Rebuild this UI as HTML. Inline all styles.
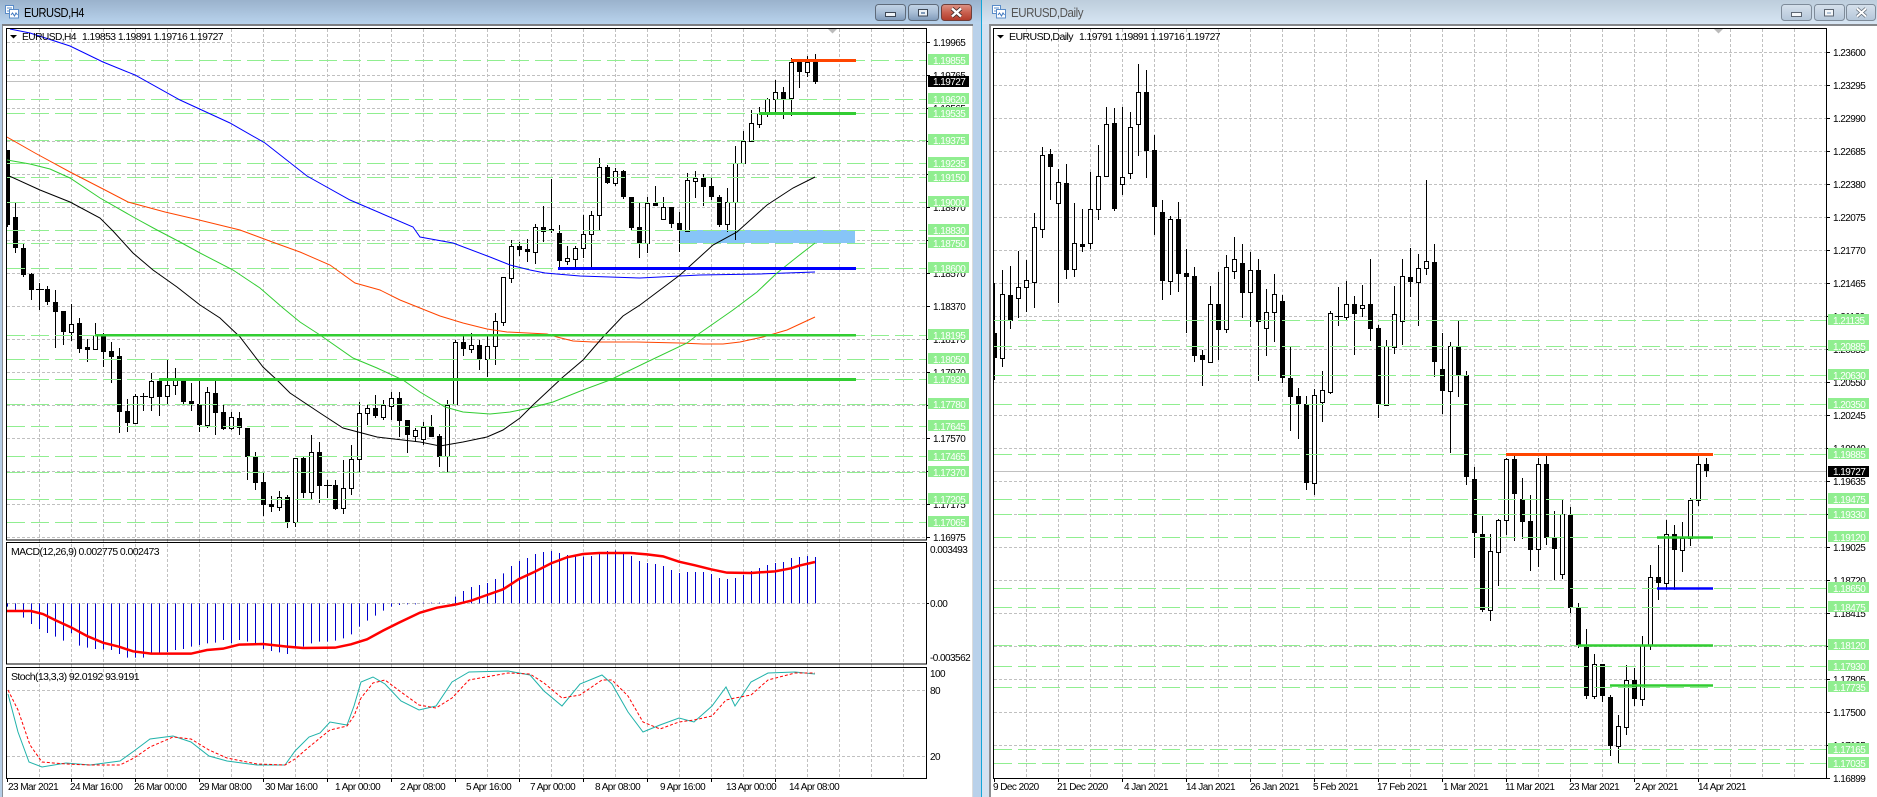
<!DOCTYPE html>
<html><head><meta charset="utf-8"><title>EURUSD charts</title>
<style>
html,body{margin:0;padding:0;background:#fff;width:1877px;height:797px;overflow:hidden}
svg{position:absolute;left:0;top:0;display:block}
text{font-family:"Liberation Sans",sans-serif;font-size:10px;letter-spacing:-.55px;fill:#000}
.w{fill:#fff}
.tt{font-size:12.5px;letter-spacing:-.5px}
</style></head><body>
<svg width="1877" height="797" viewBox="0 0 1877 797" xmlns="http://www.w3.org/2000/svg">
<defs>
<linearGradient id="t1" x1="0" y1="0" x2="0" y2="1"><stop offset="0" stop-color="#9ab2cc"/><stop offset="1" stop-color="#b9d3ed"/></linearGradient>
<linearGradient id="t2" x1="0" y1="0" x2="0" y2="1"><stop offset="0" stop-color="#bdcddc"/><stop offset="1" stop-color="#d7e5f3"/></linearGradient>
<linearGradient id="b1" x1="0" y1="0" x2="0" y2="1"><stop offset="0" stop-color="#c3d4e6"/><stop offset=".5" stop-color="#a9bed6"/><stop offset="1" stop-color="#7f9ab9"/></linearGradient>
<linearGradient id="b2" x1="0" y1="0" x2="0" y2="1"><stop offset="0" stop-color="#dc9385"/><stop offset=".5" stop-color="#c9604f"/><stop offset="1" stop-color="#b13a2a"/></linearGradient>
<linearGradient id="b3" x1="0" y1="0" x2="0" y2="1"><stop offset="0" stop-color="#d6e1ec"/><stop offset="1" stop-color="#b4c6d9"/></linearGradient>
<clipPath id="cl"><rect x="7" y="29" width="919" height="511"/></clipPath>
<clipPath id="cr"><rect x="994" y="29" width="832" height="750"/></clipPath>
</defs>

<!-- window chrome -->
<rect x="0" y="0" width="982" height="24" fill="url(#t1)"/>
<rect x="982" y="0" width="895" height="24" fill="url(#t2)"/>
<rect x="0" y="24" width="3" height="773" fill="#b5cde6"/>
<rect x="2" y="24" width="1" height="773" fill="#8a8f96"/>
<rect x="2" y="24" width="971" height="2" fill="#7d7f84"/>
<rect x="973" y="24" width="8" height="773" fill="#b9d1ea"/>
<rect x="981" y="0" width="1" height="797" fill="#12a6d8"/>
<rect x="982" y="24" width="7" height="773" fill="#d4e2f0"/>
<rect x="989" y="24" width="2" height="773" fill="#8b8d90"/>
<rect x="989" y="24" width="888" height="2" fill="#85888c"/>
<rect x="972" y="26" width="1" height="771" fill="#dcdcdc"/>

<!-- title icons -->
<g fill="#fff" stroke="#5a8cc8" stroke-width="1">
<rect x="5.500" y="5.500" width="8" height="8"/><rect x="9.500" y="9.500" width="9" height="8.500"/>
<rect x="992.500" y="5.500" width="8" height="8"/><rect x="996.500" y="9.500" width="9" height="8.500"/>
</g>
<path d="M11 15l1.500-2 2 3 1.500-3 1.500 2M998 15l1.500-2 2 3 1.500-3 1.500 2" fill="none" stroke="#3f78c0" stroke-width="1"/>
<path d="M7 8h5M7 11h2M994 8h5M994 11h2" stroke="#5a8cc8" stroke-width="1"/>
<text x="24" y="17" class="tt" fill="#111" textLength="60" lengthAdjust="spacingAndGlyphs">EURUSD,H4</text>
<text x="1011" y="17" class="tt" style="fill:#555" textLength="72" lengthAdjust="spacingAndGlyphs">EURUSD,Daily</text>

<!-- left buttons -->
<rect x="875.500" y="4.500" width="30" height="16" rx="3" fill="url(#b1)" stroke="#5f6b7a"/>
<rect x="908.500" y="4.500" width="30" height="16" rx="3" fill="url(#b1)" stroke="#5f6b7a"/>
<rect x="941.500" y="4.500" width="30" height="16" rx="3" fill="url(#b2)" stroke="#6f3f3a"/>
<rect x="885.500" y="12.500" width="10" height="4" fill="#eef3f8" stroke="#3c4654"/>
<rect x="918.500" y="9.500" width="9" height="6.500" fill="#eef3f8" stroke="#3c4654"/>
<rect x="921" y="12" width="4" height="2" fill="#7f9ab9"/>
<path d="M952 8.500l9 8M961 8.500l-9 8" stroke="#3c2a28" stroke-width="4"/>
<path d="M952 8.500l9 8M961 8.500l-9 8" stroke="#fff" stroke-width="2.500"/>
<!-- right buttons -->
<rect x="1781.500" y="4.500" width="30" height="16" rx="3" fill="url(#b3)" stroke="#7e8b99"/>
<rect x="1814.500" y="4.500" width="30" height="16" rx="3" fill="url(#b3)" stroke="#7e8b99"/>
<rect x="1846.500" y="4.500" width="29" height="16" rx="3" fill="url(#b3)" stroke="#7e8b99"/>
<rect x="1791.500" y="12.500" width="10" height="4" fill="#f4f7fa" stroke="#5c6672"/>
<rect x="1824.500" y="9.500" width="9" height="6.500" fill="#f4f7fa" stroke="#5c6672"/>
<rect x="1827" y="12" width="4" height="2" fill="#b4c6d9"/>
<path d="M1857 8.500l9 8M1866 8.500l-9 8" stroke="#5c6672" stroke-width="3.500"/>
<path d="M1857 8.500l9 8M1866 8.500l-9 8" stroke="#fff" stroke-width="2"/>

<!-- ============ LEFT CHART ============ -->
<!-- grid -->
<path stroke="#c0c0c0" stroke-dasharray="3 2" fill="none" d="M39.500 29V778M71.500 29V778M103.500 29V778M135.500 29V778M167.500 29V778M199.500 29V778M231.500 29V778M263.500 29V778M295.500 29V778M327.500 29V778M359.500 29V778M391.500 29V778M423.500 29V778M455.500 29V778M487.500 29V778M519.500 29V778M551.500 29V778M583.500 29V778M615.500 29V778M647.500 29V778M679.500 29V778M711.500 29V778M743.500 29V778M775.500 29V778M807.500 29V778M839.500 29V778M871.500 29V778M903.500 29V778"/>
<path stroke="#c0c0c0" stroke-dasharray="3 2" fill="none" d="M7 42.500H926M7 75.500H926M7 108.500H926M7 141.500H926M7 174.500H926M7 207.500H926M7 240.500H926M7 273.500H926M7 306.500H926M7 339.500H926M7 372.500H926M7 405.500H926M7 438.500H926M7 471.500H926M7 504.500H926M7 537.500H926M7 603.500H926M7 690.500H926M7 756.500H926"/>

<g clip-path="url(#cl)">
<rect x="679" y="230" width="176" height="13" fill="#87c5f7"/>
<path stroke="#c0c0c0" d="M7 81.500H926"/>
<!-- wicks -->
<path stroke="#000" fill="none" d="M7.500 150V227M15.500 203V253M23.500 243V277M31.500 273V300M39.500 283V310M36 289.500h8M47.500 286V305M55.500 290V348M63.500 311V345M71.500 304V341M79.500 318V353M87.500 339V362M95.500 323V349M103.500 333V367M111.500 342V383M119.500 348V433M127.500 399V432M135.500 394V423M143.500 393V411M140 396.500h8M151.500 373V411M159.500 380V416M167.500 360V405M175.500 368V395M183.500 381V405M191.500 383V411M199.500 380V432M207.500 387V428M215.500 381V435M223.500 405V430M231.500 412V430M239.500 412V435M247.500 428V480M255.500 452V490M263.500 473V516M271.500 496V512M279.500 491V511M287.500 495V528M295.500 458V527M303.500 457V498M311.500 435V499M319.500 442V503M327.500 480V498M324 485.500h8M335.500 480V510M343.500 460V514M351.500 445V495M359.500 402V472M367.500 405V425M375.500 395V418M383.500 400V420M391.500 392V420M399.500 392V437M407.500 420V453M415.500 428V442M423.500 422V445M431.500 415V437M439.500 434V467M447.500 400V472M455.500 340V405M463.500 336V356M471.500 333V353M479.500 340V370M487.500 336V377M495.500 313V365M503.500 277V326M511.500 240V283M519.500 242V256M527.500 239V262M535.500 224V264M543.500 206V242M551.500 179V233M559.500 225V269M567.500 246V265M575.500 246V267M583.500 215V258M591.500 211V267M599.500 158V230M607.500 165V184M615.500 168V186M623.500 170V199M631.500 197V230M639.500 203V258M647.500 197V253M655.500 186V206M663.500 197V220M671.500 207V228M679.500 212V252M687.500 173V231M695.500 171V198M703.500 174V206M711.500 177V200M719.500 195V227M727.500 188V232M735.500 146V240M743.500 131V164M751.500 110V141M759.500 107V128M767.500 98V117M775.500 80V112M783.500 87V119M791.500 58V116M799.500 60V88M807.500 56V77M815.500 54V84"/>
<!-- black bodies -->
<path stroke="#000" stroke-width="5" fill="none" d="M7.500 150V225M15.500 217V248M23.500 248V275M31.500 274V290M47.500 289V302M55.500 302V312M63.500 311V332M79.500 323V349M87.500 347V350M103.500 335V352M111.500 351V357M119.500 356V412M127.500 411V423M159.500 381V397M183.500 381V402M191.500 401V404M199.500 404V425M215.500 393V413M223.500 412V429M239.500 418V428M247.500 428V457M255.500 457V483M263.500 482V505M271.500 504V507M287.500 497V522M303.500 458V493M319.500 452V486M335.500 485V509M375.500 408V416M399.500 398V421M407.500 420V435M431.500 427V437M439.500 436V457M463.500 342V349M479.500 345V359M519.500 246V250M527.500 249V252M543.500 227V232M551.500 229V231M559.500 233V261M607.500 167V183M623.500 171V197M631.500 197V228M639.500 227V243M655.500 203V206M671.500 207V224M679.500 223V230M703.500 178V187M711.500 186V197M719.500 197V225M783.500 92V99M799.500 62V72M815.500 62V82"/>
<!-- hollow bodies -->
<path stroke="#000" fill="#fff" d="M69.500 324.500h4V332.500h-4zM93.500 335.500h4V349.500h-4zM133.500 396.500h4V423.500h-4zM149.500 381.500h4V397.500h-4zM165.500 385.500h4V396.500h-4zM173.500 380.500h4V385.500h-4zM205.500 392.500h4V425.500h-4zM229.500 417.500h4V428.500h-4zM277.500 497.500h4V507.500h-4zM293.500 458.500h4V522.500h-4zM309.500 452.500h4V492.500h-4zM341.500 488.500h4V508.500h-4zM349.500 459.500h4V488.500h-4zM357.500 413.500h4V459.500h-4zM365.500 408.500h4V413.500h-4zM381.500 405.500h4V417.500h-4zM389.500 398.500h4V406.500h-4zM413.500 430.500h4V436.500h-4zM421.500 427.500h4V439.500h-4zM445.500 405.500h4V456.500h-4zM453.500 342.500h4V404.500h-4zM469.500 345.500h4V349.500h-4zM485.500 346.500h4V359.500h-4zM493.500 321.500h4V346.500h-4zM501.500 277.500h4V322.500h-4zM509.500 246.500h4V278.500h-4zM533.500 227.500h4V252.500h-4zM565.500 258.500h4V261.500h-4zM573.500 248.500h4V259.500h-4zM581.500 234.500h4V248.500h-4zM589.500 215.500h4V234.500h-4zM597.500 167.500h4V215.500h-4zM613.500 171.500h4V183.500h-4zM645.500 203.500h4V243.500h-4zM661.500 207.500h4V219.500h-4zM685.500 180.500h4V231.500h-4zM693.500 178.500h4V181.500h-4zM725.500 202.500h4V224.500h-4zM733.500 163.500h4V202.500h-4zM741.500 141.500h4V163.500h-4zM749.500 123.500h4V141.500h-4zM757.500 113.500h4V124.500h-4zM765.500 99.500h4V113.500h-4zM773.500 92.500h4V99.500h-4zM789.500 62.500h4V98.500h-4zM805.500 62.500h4V72.500h-4z"/>
<!-- green level dashes -->
<path stroke="#90ee90" stroke-dasharray="18 6" fill="none" d="M7 60.500H926M7 99.500H926M7 113.500H926M7 140.500H926M7 163.500H926M7 177.500H926M7 202.500H926M7 230.500H926M7 243.500H926M7 268.500H926M7 335.500H926M7 359.500H926M7 379.500H926M7 404.500H926M7 426.500H926M7 456.500H926M7 472.500H926M7 499.500H926M7 522.500H926"/>
<!-- MAs -->
<g fill="none" stroke-width="1">
<polyline stroke="#0000ff" points="10,29 30,33 70,46 103,62 135,75 180,100 230,123 265,143 307,176 350,200 413,227 420,237 453,243 490,257 510,265 530,270 545,273 580,276 640,278 700,275 760,274 815,272"/>
<polyline stroke="#ff4500" points="7,137 35,153 70,172 105,190 128,202 165,212 195,219 240,230 275,243 300,252 330,265 355,283 380,290 400,300 420,308 440,316 463,323 487,329 507,332 547,334 557,337 573,341 593,342 637,342 680,343 703,344 723,344 740,342 763,337 787,330 815,317"/>
<polyline stroke="#32cd32" points="7,160 30,164 50,169 70,178 100,198 135,218 157,230 180,242 200,253 233,270 260,288 283,308 300,322 320,335 353,358 377,368 403,380 420,392 445,407 463,412 490,414 510,412 530,408 553,402 583,390 610,380 647,362 687,343 700,333 733,310 757,292 777,273 797,257 815,243"/>
<polyline stroke="#000" points="7,175 40,190 70,202 100,218 113,231 133,253 153,270 177,287 200,305 220,318 240,337 263,367 277,380 290,393 320,413 343,428 377,437 420,442 440,446 463,442 487,437 503,430 520,418 533,405 563,377 583,360 603,337 623,316 640,305 680,275 713,245 737,232 767,205 793,188 815,177"/>
</g>
<!-- thick levels -->
<path stroke="#ff4500" stroke-width="3" d="M791 60.500H856"/>
<path stroke="#32cd32" stroke-width="3" d="M759 113.500H856M159 379.500H856"/>
<path stroke="#32cd32" stroke-width="2.500" d="M95 335.200H856"/>
<path stroke="#0000ff" stroke-width="3" d="M558 268.500H856"/>
</g>

<!-- MACD -->
<g transform="translate(0,450) scale(1,.33333)">
<path vector-effect="non-scaling-stroke" stroke="#0000cd" stroke-width="1" fill="none" d="M7.500 460V470M15.500 460V480M23.500 460V503M31.500 460V522M39.500 460V537M47.500 460V549M55.500 460V560M63.500 460V572M71.500 460V550M79.500 460V587M87.500 460V593M95.500 460V597M103.500 460V598M111.500 460V600M119.500 460V612M127.500 460V623M135.500 460V623M143.500 460V623M151.500 460V612M159.500 460V612M167.500 460V606M175.500 460V600M183.500 460V597M191.500 460V590M199.500 460V585M207.500 460V580M215.500 460V578M223.500 460V570M231.500 460V580M239.500 460V570M247.500 460V575M255.500 460V580M263.500 460V597M271.500 460V603M279.500 460V607M287.500 460V612M295.500 460V595M303.500 460V590M311.500 460V580M319.500 460V575M327.500 460V575M335.500 460V572M343.500 460V565M351.500 460V553M359.500 460V530M367.500 460V512M375.500 460V497M383.500 460V482M391.500 460V470M399.500 460V465M407.500 460V463M415.500 460V463M423.500 460V458M431.500 460V458M439.500 460V458M455.500 460V440M463.500 460V423M471.500 460V411M479.500 460V405M487.500 460V399M495.500 460V387M503.500 460V370M511.500 460V348M519.500 460V333M527.500 460V324M535.500 460V312M543.500 460V306M551.500 460V303M559.500 460V309M567.500 460V315M575.500 460V318M583.500 460V320M591.500 460V318M599.500 460V307M607.500 460V303M615.500 460V301M623.500 460V310M631.500 460V318M639.500 460V333M647.500 460V339M655.500 460V342M663.500 460V348M671.500 460V360M679.500 460V369M687.500 460V366M695.500 460V366M703.500 460V366M711.500 460V372M719.500 460V384M727.500 460V387M735.500 460V384M743.500 460V375M751.500 460V363M759.500 460V354M767.500 460V345M775.500 460V339M783.500 460V336M791.500 460V324M799.500 460V321M807.500 460V318M815.500 460V321"/>
<polyline vector-effect="non-scaling-stroke" stroke="#ff0000" stroke-width="2.500" fill="none" points="7,483 31,483 43,492 55,510 71,532 87,558 103,578 119,590 133,604 151,611 191,611 207,600 223,596 239,584 263,582 287,590 303,594 335,593 351,583 367,568 383,542 399,518 420,488 437,473 455,464 471,452 487,435 503,418 519,387 535,365 551,340 567,322 583,312 599,309 631,309 647,313 663,319 679,335 695,346 711,358 727,368 751,369 775,364 791,355 799,347 815,336"/>
</g>

<!-- Stoch -->
<polyline fill="none" stroke="#20b2aa" points="8,694 18,732 29,762 42,767 66,763 90,765 120,761 134,751 150,739 173,736 191,742 209,756 227,761 257,765 285,765 295,751 309,737 320,733 330,722 347,725 354,706 361,682 373,677 385,684 401,701 419,710 436,706 452,682 469,672 508,671 530,675 544,691 562,706 580,684 602,675 612,684 628,712 643,732 660,725 679,718 694,722 712,706 726,687 735,706 751,682 768,673 795,672 815,674"/>
<polyline fill="none" stroke="#ff0000" stroke-dasharray="3 2" points="8,690 18,710 30,745 42,762 66,764 90,765 120,765 134,758 150,747 173,737 191,739 209,750 227,758 257,764 285,765 295,759 309,747 320,738 330,730 347,726 354,716 361,698 373,683 385,680 401,692 419,705 436,708 452,698 469,680 508,673 530,674 544,683 562,698 580,695 602,680 612,680 628,696 643,722 660,729 679,722 694,720 712,716 726,700 735,698 751,695 768,680 795,673 815,673"/>

<!-- left panels -->
<g fill="none" stroke="#000">
<rect x="6.500" y="28.500" width="920" height="511.500"/>
<rect x="6.500" y="542.500" width="920" height="121.500"/>
<rect x="6.500" y="667.500" width="920" height="111"/>
</g>
<path stroke="#000" d="M926 42.500h4M926 75.500h4M926 108.500h4M926 141.500h4M926 174.500h4M926 207.500h4M926 240.500h4M926 273.500h4M926 306.500h4M926 339.500h4M926 372.500h4M926 405.500h4M926 438.500h4M926 471.500h4M926 504.500h4M926 537.500h4M926 603.500h3M7.500 779v3M71.500 779v3M135.500 779v3M199.500 779v3M263.500 779v3M327.500 779v3M391.500 779v3M455.500 779v3M519.500 779v3M583.500 779v3M647.500 779v3M711.500 779v3M775.500 779v3"/>

<path d="M10 35h7l-3.500 3.500z" fill="#000"/>
<path d="M828 29h9l-4.500 4.500z" fill="#bbb"/>
<text x="22" y="40" textLength="54" lengthAdjust="spacingAndGlyphs">EURUSD,H4</text>
<text x="82" y="40" textLength="141" lengthAdjust="spacingAndGlyphs">1.19853 1.19891 1.19716 1.19727</text>
<text x="11" y="555" textLength="148" lengthAdjust="spacingAndGlyphs">MACD(12,26,9) 0.002775 0.002473</text>
<text x="11" y="680" textLength="128" lengthAdjust="spacingAndGlyphs">Stoch(13,3,3) 92.0192 93.9191</text>

<!-- left axis -->
<g>
<text x="933" y="46">1.19965</text><text x="933" y="79">1.19765</text><text x="933" y="112">1.19565</text><text x="933" y="145">1.19370</text><text x="933" y="178">1.19170</text><text x="933" y="211">1.18970</text><text x="933" y="244">1.18770</text><text x="933" y="277">1.18570</text><text x="933" y="310">1.18370</text><text x="933" y="343">1.18170</text><text x="933" y="376">1.17970</text><text x="933" y="409">1.17770</text><text x="933" y="442">1.17570</text><text x="933" y="475">1.17370</text><text x="933" y="508">1.17175</text><text x="933" y="541">1.16975</text>
<text x="930" y="553">0.003493</text><text x="930" y="607">0.00</text><text x="930" y="661">-0.003562</text>
<text x="930" y="677">100</text><text x="930" y="694">80</text><text x="930" y="760">20</text>
</g>
<g fill="#90ee90">
<rect x="928" y="54" width="41" height="11"/><rect x="928" y="93" width="41" height="11"/><rect x="928" y="107" width="41" height="11"/><rect x="928" y="134" width="41" height="11"/><rect x="928" y="157" width="41" height="11"/><rect x="928" y="171" width="41" height="11"/><rect x="928" y="196" width="41" height="11"/><rect x="928" y="224" width="41" height="11"/><rect x="928" y="237" width="41" height="11"/><rect x="928" y="262" width="41" height="11"/><rect x="928" y="329" width="41" height="11"/><rect x="928" y="353" width="41" height="11"/><rect x="928" y="373" width="41" height="11"/><rect x="928" y="398" width="41" height="11"/><rect x="928" y="420" width="41" height="11"/><rect x="928" y="450" width="41" height="11"/><rect x="928" y="466" width="41" height="11"/><rect x="928" y="493" width="41" height="11"/><rect x="928" y="516" width="41" height="11"/>
</g>
<rect x="928" y="76" width="41" height="11" fill="#000"/>
<g>
<text class="w" x="933" y="64">1.19855</text><text class="w" x="933" y="85">1.19727</text><text class="w" x="933" y="103">1.19620</text><text class="w" x="933" y="117">1.19535</text><text class="w" x="933" y="144">1.19375</text><text class="w" x="933" y="167">1.19235</text><text class="w" x="933" y="181">1.19150</text><text class="w" x="933" y="206">1.19000</text><text class="w" x="933" y="234">1.18830</text><text class="w" x="933" y="247">1.18750</text><text class="w" x="933" y="272">1.18600</text><text class="w" x="933" y="339">1.18195</text><text class="w" x="933" y="363">1.18050</text><text class="w" x="933" y="383">1.17930</text><text class="w" x="933" y="408">1.17780</text><text class="w" x="933" y="430">1.17645</text><text class="w" x="933" y="460">1.17465</text><text class="w" x="933" y="476">1.17370</text><text class="w" x="933" y="503">1.17205</text><text class="w" x="933" y="526">1.17065</text>
</g>
<!-- left time axis -->
<g>
<text x="8" y="790">23 Mar 2021</text><text x="70" y="790">24 Mar 16:00</text><text x="134" y="790">26 Mar 00:00</text><text x="199" y="790">29 Mar 08:00</text><text x="265" y="790">30 Mar 16:00</text><text x="335" y="790">1 Apr 00:00</text><text x="400" y="790">2 Apr 08:00</text><text x="466" y="790">5 Apr 16:00</text><text x="530" y="790">7 Apr 00:00</text><text x="595" y="790">8 Apr 08:00</text><text x="660" y="790">9 Apr 16:00</text><text x="726" y="790">13 Apr 00:00</text><text x="789" y="790">14 Apr 08:00</text>
</g>

<!-- ============ RIGHT CHART ============ -->
<path stroke="#c0c0c0" stroke-dasharray="3 2" fill="none" d="M1026.500 29V778M1058.500 29V778M1090.500 29V778M1122.500 29V778M1154.500 29V778M1186.500 29V778M1218.500 29V778M1250.500 29V778M1282.500 29V778M1314.500 29V778M1346.500 29V778M1378.500 29V778M1410.500 29V778M1442.500 29V778M1474.500 29V778M1506.500 29V778M1538.500 29V778M1570.500 29V778M1602.500 29V778M1634.500 29V778M1666.500 29V778M1698.500 29V778M1730.500 29V778M1762.500 29V778M1794.500 29V778"/>
<path stroke="#c0c0c0" stroke-dasharray="3 2" fill="none" d="M994 52.500H1826M994 85.500H1826M994 118.500H1826M994 151.500H1826M994 184.500H1826M994 217.500H1826M994 250.500H1826M994 283.500H1826M994 316.500H1826M994 349.500H1826M994 382.500H1826M994 415.500H1826M994 448.500H1826M994 481.500H1826M994 514.500H1826M994 547.500H1826M994 580.500H1826M994 613.500H1826M994 646.500H1826M994 679.500H1826M994 712.500H1826M994 745.500H1826"/>
<g clip-path="url(#cr)">
<path stroke="#c0c0c0" d="M994 471.500H1826"/>
<path stroke="#000" fill="none" d="M994.500 283V380M1002.500 270V367M1010.500 266V329M1018.500 251V318M1026.500 260V312M1034.500 213V308M1042.500 147V238M1050.500 149V200M1058.500 169V303M1066.500 164V279M1074.500 203V277M1082.500 209V252M1090.500 172V249M1098.500 145V220M1106.500 107V177M1114.500 108V211M1122.500 107V195M1130.500 112V179M1138.500 64V156M1146.500 70V178M1154.500 135V235M1162.500 200V300M1170.500 216V295M1178.500 202V292M1186.500 249V333M1194.500 267V362M1202.500 350V386M1210.500 286V363M1218.500 272V360M1226.500 255V333M1234.500 237V279M1242.500 244V318M1250.500 252V327M1258.500 259V381M1266.500 289V356M1274.500 274V342M1282.500 295V383M1290.500 347V431M1298.500 388V439M1306.500 396V490M1314.500 389V495M1322.500 371V422M1330.500 311V394M1338.500 287V326M1335 316.500h8M1346.500 281V320M1354.500 296V355M1362.500 285V317M1370.500 259V341M1378.500 325V418M1386.500 340V406M1394.500 286V354M1402.500 259V345M1410.500 248V297M1418.500 254V326M1426.500 180V275M1434.500 244V377M1442.500 333V414M1450.500 342V453M1458.500 321V397M1466.500 371V485M1474.500 467V558M1482.500 516V612M1490.500 534V621M1498.500 519V586M1506.500 458V535M1514.500 456V541M1522.500 478V539M1530.500 495V571M1538.500 458V567M1546.500 456V545M1554.500 511V580M1562.500 500V579M1570.500 507V613M1578.500 603V648M1586.500 629V699M1594.500 654V699M1602.500 664V702M1610.500 695V756M1618.500 715V763M1626.500 665V735M1634.500 668V706M1642.500 636V706M1650.500 565V650M1658.500 545V600M1666.500 520V590M1674.500 525V590M1682.500 522V572M1690.500 498V546M1698.500 455V506M1706.500 458V477"/>
<path stroke="#000" stroke-width="5" fill="none" d="M994.500 333V358M1010.500 295V321M1050.500 154V167M1066.500 183V270M1082.500 244V247M1114.500 123V209M1146.500 92V151M1154.500 150V207M1162.500 212V281M1178.500 219V274M1186.500 273V277M1194.500 276V356M1202.500 355V360M1218.500 304V330M1242.500 263V293M1258.500 270V322M1282.500 301V378M1290.500 378V397M1298.500 396V404M1306.500 404V483M1354.500 304V314M1370.500 304V329M1378.500 328V404M1410.500 277V282M1434.500 262V362M1442.500 369V391M1458.500 347V375M1466.500 375V477M1474.500 479V533M1482.500 534V610M1514.500 459V494M1522.500 499V522M1530.500 521V550M1546.500 464V538M1554.500 538V549M1570.500 515V608M1578.500 608V645M1586.500 647V696M1602.500 664V696M1610.500 697V746M1634.500 680V699M1658.500 577V583M1674.500 534V550M1706.500 464V471"/>
<path stroke="#000" fill="#fff" d="M1000.500 294.500h4V358.500h-4zM1016.500 287.500h4V298.500h-4zM1024.500 280.500h4V287.500h-4zM1032.500 227.500h4V282.500h-4zM1040.500 155.500h4V229.500h-4zM1056.500 182.500h4V203.500h-4zM1072.500 243.500h4V269.500h-4zM1088.500 209.500h4V243.500h-4zM1096.500 176.500h4V209.500h-4zM1104.500 124.500h4V176.500h-4zM1120.500 177.500h4V184.500h-4zM1128.500 127.500h4V173.500h-4zM1136.500 92.500h4V124.500h-4zM1168.500 219.500h4V281.500h-4zM1208.500 304.500h4V362.500h-4zM1224.500 267.500h4V329.500h-4zM1232.500 259.500h4V271.500h-4zM1248.500 270.500h4V292.500h-4zM1264.500 312.500h4V328.500h-4zM1272.500 294.500h4V312.500h-4zM1312.500 395.500h4V483.500h-4zM1320.500 390.500h4V402.500h-4zM1328.500 313.500h4V392.500h-4zM1344.500 304.500h4V317.500h-4zM1360.500 305.500h4V308.500h-4zM1384.500 346.500h4V405.500h-4zM1392.500 314.500h4V347.500h-4zM1400.500 276.500h4V321.500h-4zM1416.500 268.500h4V282.500h-4zM1424.500 261.500h4V268.500h-4zM1448.500 346.500h4V391.500h-4zM1488.500 551.500h4V610.500h-4zM1496.500 520.500h4V552.500h-4zM1504.500 459.500h4V520.500h-4zM1536.500 464.500h4V549.500h-4zM1560.500 514.500h4V574.500h-4zM1592.500 664.500h4V696.500h-4zM1616.500 726.500h4V746.500h-4zM1624.500 680.500h4V727.500h-4zM1640.500 645.500h4V699.500h-4zM1648.500 577.500h4V645.500h-4zM1664.500 534.500h4V583.500h-4zM1680.500 538.500h4V550.500h-4zM1688.500 500.500h4V538.500h-4zM1696.500 464.500h4V500.500h-4z"/>
<path stroke="#90ee90" stroke-dasharray="18 6" fill="none" d="M994 320.500H1826M994 346.500H1826M994 375.500H1826M994 404.500H1826M994 454.500H1826M994 499.500H1826M994 514.500H1826M994 537.500H1826M994 588.500H1826M994 607.500H1826M994 645.500H1826M994 666.500H1826M994 687.500H1826M994 749.500H1826M994 763.500H1826"/>
<path stroke="#ff4500" stroke-width="3" d="M1506 454.500H1713"/>
<path stroke="#32cd32" stroke-width="2.500" d="M1657 537.500H1713M1578 645.500H1713M1610 685.500H1713"/>
<path stroke="#0000ff" stroke-width="2.500" d="M1657 588.500H1713"/>
</g>
<rect x="993.500" y="28.500" width="833" height="750" fill="none" stroke="#000"/>
<path stroke="#000" d="M1826 52.500h4M1826 85.500h4M1826 118.500h4M1826 151.500h4M1826 184.500h4M1826 217.500h4M1826 250.500h4M1826 283.500h4M1826 316.500h4M1826 349.500h4M1826 382.500h4M1826 415.500h4M1826 448.500h4M1826 481.500h4M1826 514.500h4M1826 547.500h4M1826 580.500h4M1826 613.500h4M1826 646.500h4M1826 679.500h4M1826 712.500h4M1826 745.500h4M1826 778.500h4M994.500 779v3M1058.500 779v3M1122.500 779v3M1186.500 779v3M1250.500 779v3M1314.500 779v3M1378.500 779v3M1442.500 779v3M1506.500 779v3M1570.500 779v3M1634.500 779v3M1698.500 779v3"/>
<path d="M997 35h7l-3.500 3.500z" fill="#000"/>
<path d="M1714 29h9l-4.500 4.500z" fill="#bbb"/>
<text x="1009" y="40" textLength="64" lengthAdjust="spacingAndGlyphs">EURUSD,Daily</text>
<text x="1079" y="40" textLength="141" lengthAdjust="spacingAndGlyphs">1.19791 1.19891 1.19716 1.19727</text>

<g>
<text x="1833" y="56">1.23600</text><text x="1833" y="89">1.23295</text><text x="1833" y="122">1.22990</text><text x="1833" y="155">1.22685</text><text x="1833" y="188">1.22380</text><text x="1833" y="221">1.22075</text><text x="1833" y="254">1.21770</text><text x="1833" y="287">1.21465</text><text x="1833" y="320">1.21160</text><text x="1833" y="353">1.20855</text><text x="1833" y="386">1.20550</text><text x="1833" y="419">1.20245</text><text x="1833" y="452">1.19940</text><text x="1833" y="485">1.19635</text><text x="1833" y="518">1.19330</text><text x="1833" y="551">1.19025</text><text x="1833" y="584">1.18720</text><text x="1833" y="617">1.18415</text><text x="1833" y="650">1.18110</text><text x="1833" y="683">1.17805</text><text x="1833" y="716">1.17500</text><text x="1833" y="749">1.17195</text><text x="1833" y="782">1.16899</text>
</g>
<g fill="#90ee90">
<rect x="1828" y="314" width="41" height="11"/><rect x="1828" y="340" width="41" height="11"/><rect x="1828" y="369" width="41" height="11"/><rect x="1828" y="398" width="41" height="11"/><rect x="1828" y="448" width="41" height="11"/><rect x="1828" y="493" width="41" height="11"/><rect x="1828" y="508" width="41" height="11"/><rect x="1828" y="531" width="41" height="11"/><rect x="1828" y="582" width="41" height="11"/><rect x="1828" y="601" width="41" height="11"/><rect x="1828" y="639" width="41" height="11"/><rect x="1828" y="660" width="41" height="11"/><rect x="1828" y="681" width="41" height="11"/><rect x="1828" y="743" width="41" height="11"/><rect x="1828" y="757" width="41" height="11"/>
</g>
<rect x="1828" y="466" width="41" height="11" fill="#000"/>
<g>
<text class="w" x="1833" y="324">1.21135</text><text class="w" x="1833" y="350">1.20885</text><text class="w" x="1833" y="379">1.20630</text><text class="w" x="1833" y="408">1.20350</text><text class="w" x="1833" y="458">1.19885</text><text class="w" x="1833" y="475">1.19727</text><text class="w" x="1833" y="503">1.19475</text><text class="w" x="1833" y="518">1.19330</text><text class="w" x="1833" y="541">1.19120</text><text class="w" x="1833" y="592">1.18650</text><text class="w" x="1833" y="611">1.18475</text><text class="w" x="1833" y="649">1.18120</text><text class="w" x="1833" y="670">1.17930</text><text class="w" x="1833" y="691">1.17735</text><text class="w" x="1833" y="753">1.17165</text><text class="w" x="1833" y="767">1.17035</text>
</g>
<g>
<text x="993" y="790">9 Dec 2020</text><text x="1057" y="790">21 Dec 2020</text><text x="1124" y="790">4 Jan 2021</text><text x="1186" y="790">14 Jan 2021</text><text x="1250" y="790">26 Jan 2021</text><text x="1313" y="790">5 Feb 2021</text><text x="1377" y="790">17 Feb 2021</text><text x="1443" y="790">1 Mar 2021</text><text x="1505" y="790">11 Mar 2021</text><text x="1569" y="790">23 Mar 2021</text><text x="1635" y="790">2 Apr 2021</text><text x="1698" y="790">14 Apr 2021</text>
</g>
</svg>
</body></html>
